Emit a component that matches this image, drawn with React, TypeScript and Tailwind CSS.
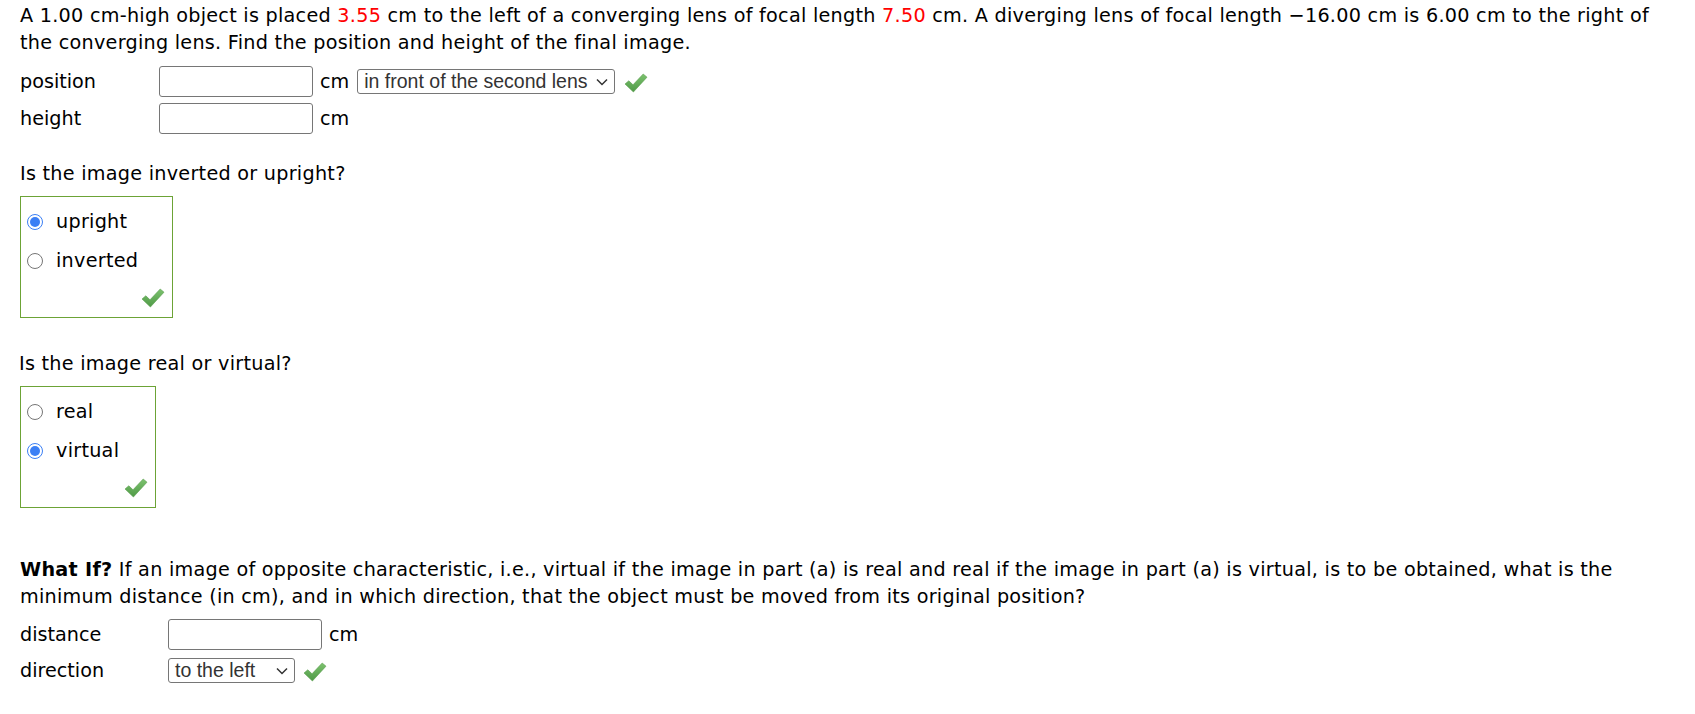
import React from "react";

const body = { fontFamily: '"DejaVu Sans", Verdana, sans-serif' };
const arial = { fontFamily: '"Liberation Sans", Arial, sans-serif' };

function Check() {
  return (
    <svg width="24" height="20" viewBox="0 0 24 20" className="shrink-0">
      <defs>
        <linearGradient id="ck" x1="0" y1="0" x2="0" y2="1">
          <stop offset="0" stopColor="#7cc26e" />
          <stop offset="1" stopColor="#4f9a47" />
        </linearGradient>
      </defs>
      <path
        d="M1 11 L4.8 7.8 L9 11.8 L19.2 1 L23 4.2 L9.4 19 Z"
        fill="url(#ck)"
        stroke="#5a9d4f"
        strokeWidth="0.6"
        strokeLinejoin="round"
      />
    </svg>
  );
}

function Radio({ checked }: { checked?: boolean }) {
  return checked ? (
    <span className="w-[16px] h-[16px] rounded-full border-[1.5px] border-[#3b7ff5] bg-white flex items-center justify-center shrink-0">
      <span className="w-[10px] h-[10px] rounded-full bg-[#3b7ff5]" />
    </span>
  ) : (
    <span className="w-[16px] h-[16px] rounded-full border-[1.5px] border-[#767676] bg-white shrink-0" />
  );
}

function Select({ value, width }: { value: string; width: string }) {
  return (
    <div
      className={`${width} h-[25px] border border-[#767676] rounded-[3px] flex items-center justify-between pl-[6px] pr-[6px] text-[19.5px] text-[#333] bg-white`}
      style={arial}
    >
      <span className="leading-none">{value}</span>
      <svg width="12" height="8" viewBox="0 0 12 8">
        <path d="M1 1.5 L6 6.5 L11 1.5" fill="none" stroke="#333" strokeWidth="1.5" />
      </svg>
    </div>
  );
}

function Input() {
  return <div className="w-[154px] h-[31px] border border-[#767676] rounded-[3px] bg-white" />;
}

function Choices({ items, sel, width }: { items: string[]; sel: number; width: string }) {
  return (
    <div className={`${width} h-[122px] border border-[#6ca336] mt-[9px] flex flex-col relative`}>
      <div className="flex flex-col gap-[12px] pt-[11px] pl-[6px]">
        {items.map((t, i) => (
          <label key={t} className="flex items-center gap-[13px] h-[27px]">
            <Radio checked={i === sel} />
            <span>{t}</span>
          </label>
        ))}
      </div>
      <div className="absolute right-[7px] bottom-[9px]">
        <Check />
      </div>
    </div>
  );
}

export default function App() {
  return (
    <div className="bg-white min-h-screen text-black text-[19.2px] leading-[27px] tracking-[0.27px] pl-[20px] pr-[20px] pt-[2px]" style={body}>
      <p>
        A 1.00 cm-high object is placed <span className="text-[#ff0000]">3.55</span> cm to the left of a converging lens of focal length{" "}
        <span className="text-[#ff0000]">7.50</span> cm. A diverging lens of focal length −16.00 cm is 6.00 cm to the right of the converging lens. Find the position and height of the final image.
      </p>

      <div className="mt-[10px] flex flex-col gap-[6px] tracking-normal">
        <div className="flex items-center h-[31px]">
          <span className="w-[139px]">position</span>
          <Input />
          <span className="ml-[7px]">cm</span>
          <div className="ml-[8px]">
            <Select value="in front of the second lens" width="w-[258px]" />
          </div>
          <div className="ml-[9px] mt-[3px]">
            <Check />
          </div>
        </div>
        <div className="flex items-center h-[31px]">
          <span className="w-[139px]">height</span>
          <Input />
          <span className="ml-[7px]">cm</span>
        </div>
      </div>

      <p className="mt-[26px]">Is the image inverted or upright?</p>
      <Choices items={["upright", "inverted"]} sel={0} width="w-[153px]" />

      <p className="mt-[32px] -ml-[1px]">Is the image real or virtual?</p>
      <Choices items={["real", "virtual"]} sel={1} width="w-[136px]" />

      <p className="mt-[48px]">
        <b>What If?</b> If an image of opposite characteristic, i.e., virtual if the image in part (a) is real and real if the image in part (a) is virtual, is to be obtained, what is the minimum distance (in cm), and in which direction, that the object must be moved from its original position?
      </p>

      <div className="mt-[9px] flex flex-col gap-[8px] tracking-normal">
        <div className="flex items-center h-[31px]">
          <span className="w-[148px]">distance</span>
          <Input />
          <span className="ml-[7px]">cm</span>
        </div>
        <div className="flex items-center h-[25px]">
          <span className="w-[148px]">direction</span>
          <Select value="to the left" width="w-[127px]" />
          <div className="ml-[8px] mt-[3px]">
            <Check />
          </div>
        </div>
      </div>
    </div>
  );
}
